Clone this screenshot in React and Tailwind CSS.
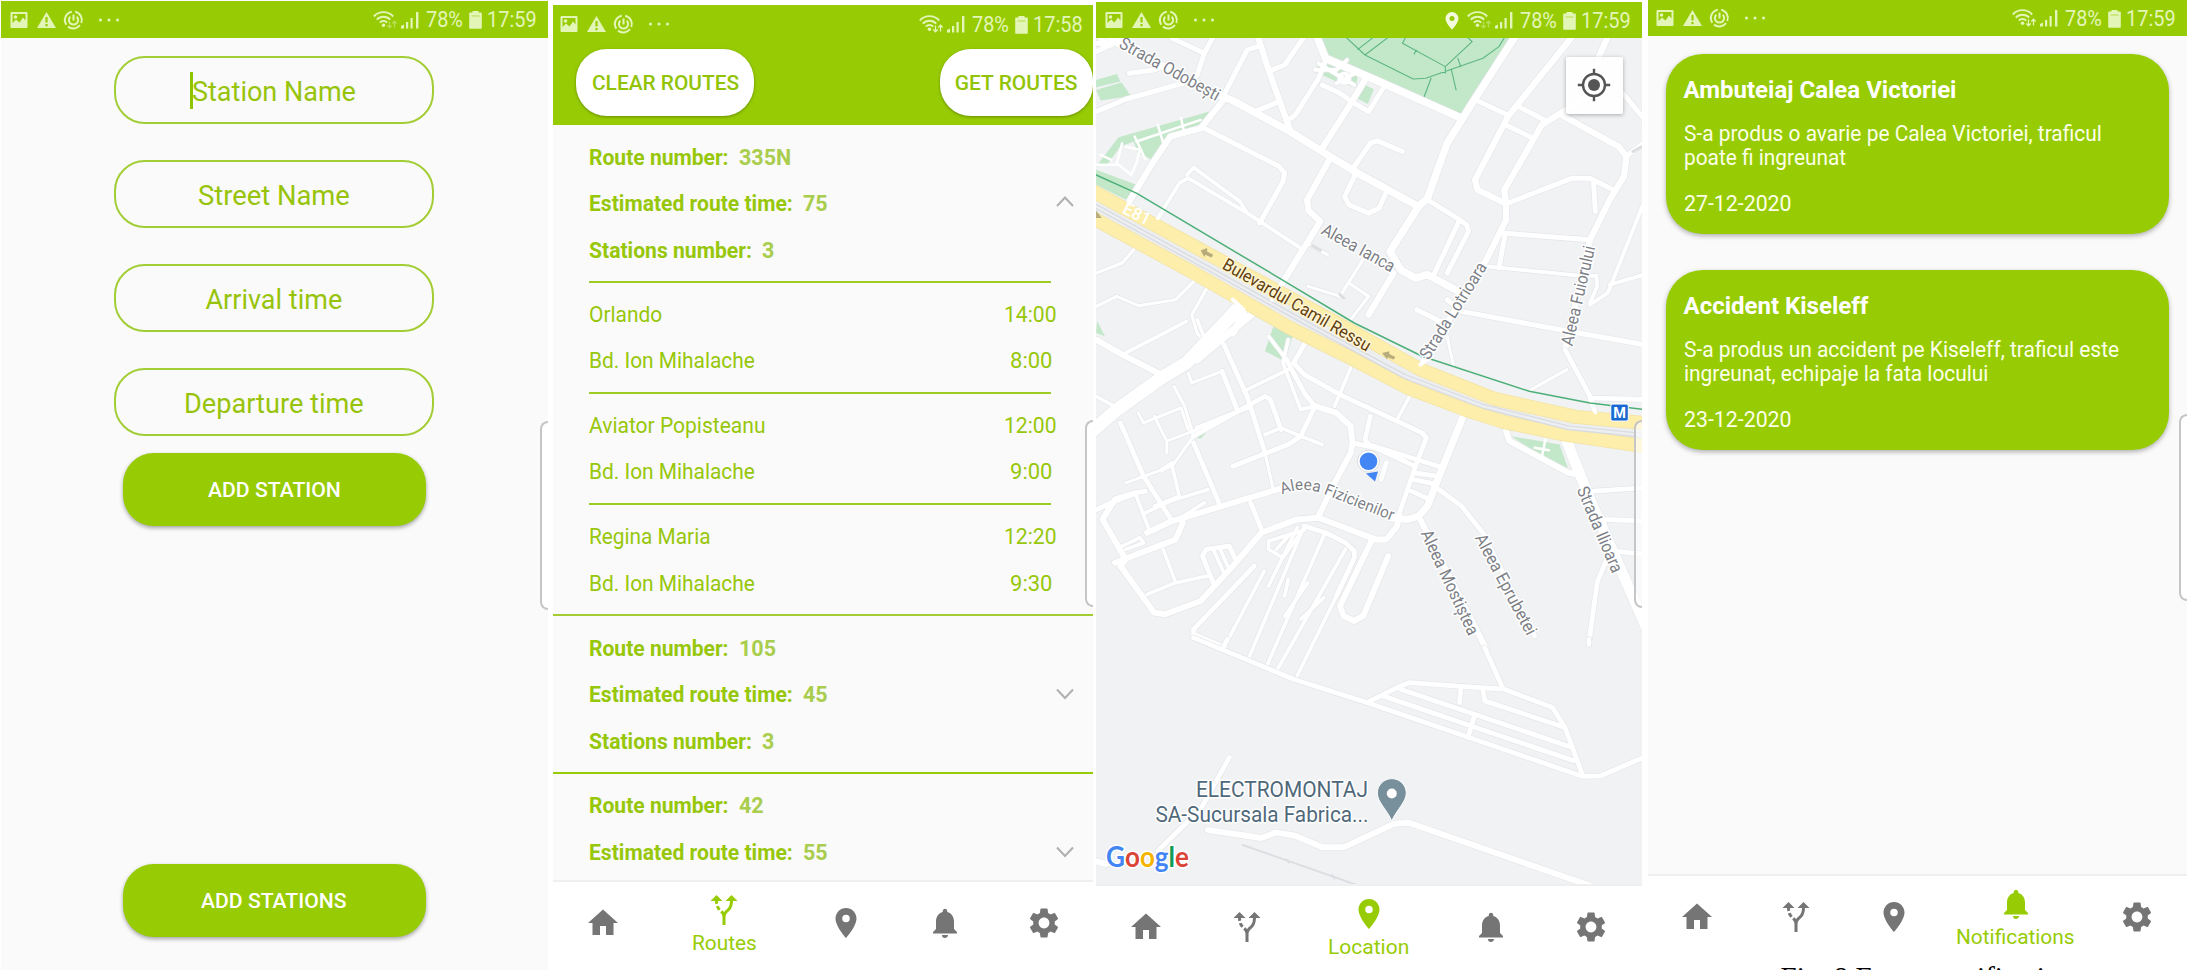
import { useLayoutEffect, useRef } from "react";
import { MdHome, MdAltRoute, MdLocationOn, MdNotifications, MdSettings } from "react-icons/md";

/* Text squeezed or stretched horizontally to fill the width of its box. */
function Fit({ className = "", children }) {
  const box = useRef(null);
  const inner = useRef(null);
  useLayoutEffect(() => {
    const w = inner.current.offsetWidth;
    if (w) inner.current.style.transform = `scaleX(${box.current.clientWidth / w})`;
  });
  return (
    <span ref={box} className={`flex shrink-0 ${className}`}>
      <span ref={inner} className="block shrink-0 origin-left whitespace-nowrap">{children}</span>
    </span>
  );
}

function StatusBar({ time, className, location, dimArrows }) {
  return (
    <div className={`flex h-9 shrink-0 items-center justify-between bg-[#97cc04] text-[#e4f5b8] ${className}`}>
      <svg width="110" height="20" viewBox="0 0 110 20" fill="none">
        <path fillRule="evenodd" fill="currentColor" d="M1.5 2h15a1 1 0 0 1 1 1v14a1 1 0 0 1-1 1h-15a1 1 0 0 1-1-1V3a1 1 0 0 1 1-1zM2.500 4v9l3.500-3.500 3.500 3 3.500-5 2.500 3V4z" />
        <circle cx="5.500" cy="7" r="1.800" fill="currentColor" />
        <path fillRule="evenodd" fill="currentColor" d="M36.500 2L46 18H27zM35.400 7v5.500h2.200V7zM35.400 14v2.200h2.200V14z" />
        <g stroke="currentColor" strokeWidth="2">
          <path d="M65.200 1.700A8.500 8.500 0 0 1 71.300 13M70 15.200A8.500 8.500 0 0 1 58 16.600M56.300 14.700A8.500 8.500 0 0 1 61.800 1.700" />
          <path d="M60.300 6.700A4.600 4.600 0 1 0 66.700 6.700M63.500 4.500v6" />
        </g>
        <g fill="currentColor">
          <circle cx="90.500" cy="10" r="1.500" />
          <circle cx="99" cy="10" r="1.500" />
          <circle cx="107.500" cy="10" r="1.500" />
        </g>
      </svg>
      <div className="flex items-center">
        {location && (
          <svg className="mr-[8px]" width="14" height="19" viewBox="0 0 14 19">
            <path fillRule="evenodd" fill="#f3fbdc" d="M7 1a6.500 6.500 0 0 1 6.500 6.500C13.500 12 7 18.500 7 18.500S.5 12 .5 7.500A6.500 6.500 0 0 1 7 1zm0 4a2.500 2.500 0 1 0 0 5 2.500 2.500 0 0 0 0-5z" />
          </svg>
        )}
        <svg width="48" height="20" viewBox="0 0 48 20" fill="none">
          <g stroke="currentColor" strokeWidth="1.900">
            <path d="M.8 6.500a13 13 0 0 1 19.400 0M3.800 9.700a9 9 0 0 1 13.400 0M6.800 12.700a5 5 0 0 1 7.400 0" />
          </g>
          <circle cx="10.500" cy="15.200" r="1.800" fill="currentColor" />
          <g stroke="currentColor" strokeWidth="1.300" opacity={dimArrows ? 0.45 : 1}>
            <path d="M16.500 11.500v6M14.300 15.500l2.200 2.300 2.200-2.300M21.500 17.500v-6M19.300 13.500l2.200-2.300 2.200 2.300" />
          </g>
          <g fill="currentColor">
            <path d="M28 18.500v-2.500l3-1.500v4zM33 12h2.200v6.500H33zM37.500 8h2.200v10.500h-2.200zM43 2h2.400v16.500H43z" />
          </g>
        </svg>
        <Fit className="ml-[5px] w-[37px] pt-px text-[21.500px] leading-6">78%</Fit>
        <svg className="mr-[5px] ml-[6px]" width="13" height="19" viewBox="0 0 13 19">
          <path fill="currentColor" d="M3.500 1h6v1.500H12a.8.8 0 0 1 .8.8V18a.8.8 0 0 1-.8.8H1a.8.8 0 0 1-.8-.8V3.300A.8.800 0 0 1 1 2.500h2.500z" />
          <path d="M2.500 6h8" stroke="#97cc04" strokeWidth="1" opacity=".6" />
        </svg>
        <Fit className="w-[50px] pt-px text-[21.500px] leading-6">{time}</Fit>
      </div>
    </div>
  );
}

const NAV = [
  ["Home", MdHome],
  ["Routes", MdAltRoute],
  ["Location", MdLocationOn],
  ["Notifications", MdNotifications],
  ["Settings", MdSettings],
];

function BottomNav({ active, labelWidth, className = "" }) {
  return (
    <nav className={`flex shrink-0 border-t-2 border-[#efefef] bg-white ${className}`}>
      {NAV.map(([name, Icon]) =>
        name === active ? (
          <div key={name} className="flex h-[82px] w-[144px] flex-col items-center pt-[10px] text-[#97cc04]">
            <Icon size={36} />
            <Fit className={`mt-[3px] text-[20.500px] leading-6 ${labelWidth}`}>{name}</Fit>
          </div>
        ) : (
          <div key={name} className="flex h-[82px] flex-1 items-center justify-center text-[#757575]">
            <Icon size={36} />
          </div>
        )
      )}
    </nav>
  );
}

function EdgeHandle({ className }) {
  return <div className={`absolute right-0 rounded-l-[9px] border-2 border-r-0 border-[#c6c6c6] ${className}`} />;
}

function StationForm() {
  const fields = [
    ["Station Name", "w-[164px]", true],
    ["Street Name", "w-[152px]"],
    ["Arrival time", "w-[137px]"],
    ["Departure time", "w-[180px]"],
  ];
  return (
    <section className="relative ml-px flex h-[970px] w-[547px] shrink-0 flex-col bg-[#fafafa]">
      <StatusBar time="17:59" className="mt-px h-[37px] pr-[11px] pl-[9px]" dimArrows />
      <div className="flex flex-1 flex-col items-center pt-[17.500px] pr-px">
        <div className="flex flex-col gap-9">
          {fields.map(([label, w, focus]) => (
            <div key={label} className="flex h-[68px] w-[320px] items-center justify-center rounded-[31px] border-2 border-[#a3cd35] pt-[4px] text-[#97c40b]">
              <span className="relative flex">
                {focus && <span className="absolute -top-[2px] -left-[2px] h-[37px] w-[3px] bg-[#8fc400]" />}
                <Fit className={`text-[27px] leading-9 ${w}`}>{label}</Fit>
              </span>
            </div>
          ))}
        </div>
        <button className="mt-[17px] flex h-[73px] w-[303px] items-center justify-center rounded-[31px] bg-[#97cc04] pt-[3px] text-[21px] font-medium text-white shadow-[0_2px_4px_rgba(0,0,0,0.35)]">
          <Fit className="w-[133px]">ADD STATION</Fit>
        </button>
        <button className="mt-auto mb-[33px] flex h-[73px] w-[303px] items-center justify-center rounded-[31px] bg-[#97cc04] pt-[3px] text-[21px] font-medium text-white shadow-[0_2px_4px_rgba(0,0,0,0.35)]">
          <Fit className="w-[146px]">ADD STATIONS</Fit>
        </button>
      </div>
      <EdgeHandle className="top-[421px] h-[189px] w-[8px] bg-white" />
    </section>
  );
}

function RouteHeader({ rows, open, className = "" }) {
  return (
    <div className={`relative flex flex-col pt-[8px] pl-9 ${className}`}>
      {rows.map(([label, value, w]) => (
        <div key={label} className="flex h-[46.700px] items-center gap-[10px] pt-[2px] text-[21.500px] font-bold text-[#97c70a]">
          <Fit className={w}>{label}</Fit>
          <span className="text-[#a9cd4d]">{value}</span>
        </div>
      ))}
      <svg className="absolute top-[70px] right-[18px]" width="20" height="14" viewBox="0 0 20 14" fill="none" stroke="#b0b0b0" strokeWidth="2">
        <path d={open ? "M2 11L10 2.500l8 8.500" : "M2 3.500l8 8.500L18 3.500"} />
      </svg>
    </div>
  );
}

function Stop({ name, nameW, street, arrive, depart }) {
  return (
    <div className="ml-9 w-[462px] border-t-2 border-[#9ccc1f] pt-[7.500px] pb-[8.300px] text-[21.500px] text-[#97c70a]">
      <div className="flex h-[46.700px] items-center justify-between pt-[2px]">
        <Fit className={nameW}>{name}</Fit>
        <span className="-mr-[9.500px] flex w-[60px] justify-center"><Fit className="w-[53px]">{arrive}</Fit></span>
      </div>
      <div className="flex h-[46.700px] items-center justify-between pt-[2px]">
        <Fit className="w-[166px]">{street}</Fit>
        <span className="-mr-[9.500px] flex w-[60px] justify-center"><Fit className="w-[42px]">{depart}</Fit></span>
      </div>
    </div>
  );
}

const ROUTE_ROWS = (number, time, stations) => [
  ["Route number:", number, "w-[140px]"],
  ["Estimated route time:", time, "w-[204px]"],
  ...(stations ? [["Stations number:", stations, "w-[163px]"]] : []),
];

function Routes() {
  return (
    <section className="relative mt-[5px] ml-[5px] flex h-[965px] w-[540px] shrink-0 flex-col overflow-hidden bg-[#fafafa]">
      <StatusBar time="17:58" className="pt-[2px] pr-[10px] pl-[7px]" />
      <div className="flex h-[84.300px] shrink-0 items-start justify-between bg-[#97cc04] pt-2 pl-[23px] text-[21px] font-medium text-[#92c406]">
        <button className="flex h-[66.500px] w-[178px] items-center justify-center rounded-[31px] bg-white pt-[2px] shadow-[0_1px_3px_rgba(60,80,0,0.5)]">
          <Fit className="w-[147px]">CLEAR ROUTES</Fit>
        </button>
        <button className="flex h-[66.500px] w-[153.500px] items-center justify-center rounded-[31px] bg-white pt-[2px] shadow-[0_1px_3px_rgba(60,80,0,0.5)]">
          <Fit className="w-[123px]">GET ROUTES</Fit>
        </button>
      </div>
      <div className="flex flex-1 flex-col overflow-hidden">
        <RouteHeader open rows={ROUTE_ROWS("335N", "75", "3")} className="pb-[7.500px]" />
        <Stop name="Orlando" nameW="w-[73px]" street="Bd. Ion Mihalache" arrive="14:00" depart="8:00" />
        <Stop name="Aviator Popisteanu" nameW="w-[176px]" street="Bd. Ion Mihalache" arrive="12:00" depart="9:00" />
        <Stop name="Regina Maria" nameW="w-[122px]" street="Bd. Ion Mihalache" arrive="12:20" depart="9:30" />
        <RouteHeader rows={ROUTE_ROWS("105", "45", "3")} className="border-t-2 border-[#a3cc33] pb-[7.700px]" />
        <RouteHeader rows={ROUTE_ROWS("42", "55")} className="border-t-2 border-[#97cc04]" />
      </div>
      <BottomNav active="Routes" labelWidth="w-[65px]" className="h-[90.500px]" />
      <EdgeHandle className="top-[415px] h-[187px] w-[8px] bg-white" />
    </section>
  );
}

/* Map geometry. Each entry: [road width in px, path]. */
const ROADS_NORTH = [
  [6, "M0 70L80 130L370 290L400 302L560 395L670 468L750 520L920 620"],
  [5, "M375 285L370 305L310 385L225 410L175 490L110 605"],
  [6, "M1190 110L1070 310L1000 430L945 595L920 620L840 755L870 810L910 835L945 825L1040 880"],
  [5, "M850 820L780 945"],
  [6, "M635 110L660 175L820 250L1040 355"],
  [5, "M470 110L500 210L560 390"],
  [4, "M345 110L320 160L300 225M320 160L230 115M17 155L90 118M17 335L100 298L260 250L300 225"],
  [4, "M30 118L60 135L20 130M110 220L180 210L230 190"],
  [4, "M375 285L440 150L475 138M600 110L545 195L505 212M460 335L530 305"],
  [4, "M562 355L575 345L640 235L660 180M650 255L700 280L740 310L780 335L822 262"],
  [3, "M630 210L690 210L720 180M640 190L700 230L740 255M690 250L750 215M700 235m-2 0a14 14 0 1 0 28 0a14 14 0 1 0 -28 0"],
  [4, "M320 385L530 500L545 520L540 545L475 670"],
  [3, "M190 655L250 550L275 535L440 640L590 745M272 525L290 503L420 605L440 640"],
  [5, "M770 240L725 320L650 445"],
  [4, "M740 500L785 430L805 423L875 455"],
  [5, "M670 480L608 600L612 632L645 665L590 760L510 900"],
  [4, "M745 520L713 590L725 615L780 640L810 625L830 575"],
  [4, "M945 600L1020 650L1055 675L1060 695L1000 820M1035 660L965 820"],
  [5, "M1350 110L1170 350L1078 540L1085 570L1165 612L1165 660L1110 780L930 1090"],
  [5, "M1450 110L1425 170L1420 220L1390 290L1310 345L1265 375L1160 570L1165 612"],
  [4, "M1080 300L1170 345M1200 320L1280 365M1165 375L1240 415"],
  [5, "M1320 345L1480 440L1502 470L1495 530L1455 600L1400 720L1370 860L1330 1050"],
  [4, "M1165 612L1350 535L1400 535L1465 570M1410 550L1415 635"],
  [4, "M1500 470L1550 430M1420 200L1500 290L1550 355"],
  [4, "M1155 700L1400 720M1163 700L1145 805"],
  [3, "M1110 800L1390 830L1418 828L1420 860L1400 910M1455 855L1550 825M1550 610L1450 880L1400 915"],
  [4, "M915 930L980 965M1000 900L1040 935L1290 985L1550 1035"],
  [2.500, "M17 920L75 890L135 918L240 900L300 835M330 860L285 945L300 1000L330 1040M130 740L90 790L17 820"],
  [2.500, "M610 860L700 890L770 770M725 850L780 890L730 960M615 735L665 765"],
];

const ROADS_MID = [
  [11, "M530 -60L420 -40L270 130L200 175L70 275L0 340"],
  [6, "M410 -60L430 -20L400 40M480 -40L300 120"],
  [5, "M17 60L90 105L200 165"],
  [3, "M90 105L190 50L270 5M17 230L85 270M300 0L330 80"],
  [4, "M85 310L150 470L230 605M375 75L440 230L490 400"],
  [2.500, "M490 400L512 505M275 160L285 190L370 155M235 200L265 260L290 350L230 440L100 490"],
  [4, "M370 155L410 265"],
  [2.500, "M135 280L150 310L255 265L275 330M180 290L215 365L215 400M215 365L300 330"],
  [4, "M290 370L365 560"],
  [4, "M290 350L490 230L505 240L535 330M300 325L440 265"],
  [3, "M430 215L555 150M490 345L535 325L590 350L650 375"],
  [4, "M550 120L600 220L630 260L590 350L555 375L400 440"],
  [3, "M500 50L550 120M555 60L540 130L590 270L620 262"],
  [4, "M605 65L570 130L600 165L700 225L930 340L942 355L915 430L860 600"],
  [3, "M730 145L685 260M895 230L860 300"],
  [5, "M630 260L690 280L730 320L735 370L730 400L685 490L640 590"],
  [4, "M785 290L770 360L780 375L980 442M735 370L800 385L910 440M830 430L815 480"],
  [6, "M1045 290L970 490L945 560L920 590L890 600L840 595"],
  [4, "M910 460L970 470M905 480L970 495M900 515L950 540"],
  [4, "M970 505L1040 560L1100 640L1245 950"],
  [5, "M920 590L1110 990"],
  [4, "M0 580L60 550L130 520L155 515"],
  [5, "M160 640L230 605L540 505"],
  [5, "M70 730L240 660L260 610"],
  [5, "M130 520L70 540L35 600L100 720L85 740L180 880L210 885L310 845L400 740L480 640L580 600L640 595L800 660L830 660L860 620L865 590"],
  [4, "M450 550L480 630"],
  [3, "M130 530L165 630M155 580L225 545L330 510M240 605L320 550M230 440L250 530L180 560M90 680L140 655L150 670L100 690"],
  [3, "M205 690L240 790L160 825M240 790L330 770M200 450L230 430L200 455"],
  [4, "M345 790L315 710L325 690L390 680L405 715"],
  [3, "M345 690L375 760M365 690L385 740"],
  [4, "M460 740L290 930L290 945L380 985"],
  [3, "M488 755L375 985M600 620L445 1015M658 640L495 1040M715 690L525 1050M580 625L500 800M690 830L580 1070"],
  [4, "M600 620L660 640L715 670L740 695L740 715L690 830"],
  [3, "M600 632L500 665L500 690L540 715L590 640M522 690L560 645M555 780L545 830"],
  [3, "M610 790L545 890M655 835L590 900"],
  [5, "M790 660L700 860L710 890L740 905L765 890L835 710"],
  [5, "M1165 335L1175 365L1340 460L1365 465"],
  [9, "M1335 365L1400 540L1560 930"],
  [4, "M1410 515L1550 505M1440 600L1550 605M1470 695L1550 705"],
  [4, "M1450 710L1420 790L1397 970"],
  [4, "M1330 90L1400 230L1415 280M1400 235L1550 240"],
  [2.500, "M1335 150L1235 210M1000 50L1018 140"],
];

const ROADS_SOUTH = [
  [4, "M290 -5L570 120L775 190L1380 412L1430 410L1550 355"],
  [4, "M775 190L860 145L895 130L1090 145L1160 150L1295 205L1330 265L1380 410"],
  [4, "M820 170L1080 265L1355 365M870 150L1350 325M1100 150L1105 185L1330 265M1038 150L1035 190M1075 235L1058 295"],
  [4, "M1105 25L1155 145M1397 0V15M375 20L385 0"],
  [4, "M390 355L310 510L190 635"],
  [5, "M330 573L480 597L520 580L575 590L650 625L710 625L850 555L890 550L1400 740"],
  [5, "M10 665L45 675"],
];

const UPPER_LANE = "M0 570L370 785L700 975L930 1112L1130 1197L1360 1252L1550 1270";
const LOWER_LANE = "M0 650L300 825L560 985L730 1075L890 1165L1050 1230L1160 1268L1330 1305L1550 1340";
const RAIL = "M0 610L330 805L630 985L880 1130L1100 1220L1340 1285L1550 1308";

function Roads({ roads, y, widen = 1.2 }) {
  return (
    <g transform={`translate(0 ${y})`}>
      {roads.map(([w, d]) => (
        <path key={"c" + d} d={d} stroke="#e4e6e9" strokeWidth={w * widen + 1.3} vectorEffect="non-scaling-stroke" />
      ))}
      {roads.map(([w, d]) => (
        <path key={d} d={d} stroke="#fff" strokeWidth={w * widen} vectorEffect="non-scaling-stroke" />
      ))}
    </g>
  );
}

function StreetLabel({ x, y, angle, length, color = "#7d8187", halo = "#fff", children }) {
  return (
    <text
      transform={`translate(${x} ${y}) rotate(${angle})`}
      textAnchor="middle"
      dy="6"
      fontSize="17.500"
      fill={color}
      stroke={halo}
      strokeWidth="3"
      strokeLinejoin="round"
      paintOrder="stroke"
      textLength={length}
      lengthAdjust="spacingAndGlyphs"
    >
      {children}
    </text>
  );
}

function CityMap() {
  return (
    <svg className="block size-full font-[Roboto,sans-serif]" viewBox="1096 38 545.500 847" preserveAspectRatio="none">
      <rect x="1096" y="38" width="546" height="847" fill="#f1f2f4" />
      <g transform="translate(1090 0) scale(0.35714 0.33333)" fill="none" strokeLinecap="round" strokeLinejoin="round">
        <g fill="#c3e7c9">
          <path d="M640 110H1188L1040 345L820 255L660 170Z" />
          <path d="M645 185L750 222L745 262L690 245L630 215ZM755 248L795 268L778 312L738 290Z" />
          <path d="M17 240L75 222L85 245L17 262ZM17 270L88 248L115 288L30 302Z" />
          <path d="M80 412L335 335L310 375L225 405L175 480L135 460L122 425L85 440L50 492L17 500Z" />
          <path d="M17 510L130 555L110 605L17 555Z" />
          <path d="M515 975L570 1000L545 1085L490 1055ZM290 1293L325 1300L310 1318L295 1315Z" />
          <path d="M1180 1310L1315 1335L1338 1405L1270 1375ZM20 965L42 1010L17 1000Z" />
        </g>
        <g stroke="#5cb683" strokeWidth="1.100">
          <path vectorEffect="non-scaling-stroke" d="M715 110L770 165L905 237L940 235L1100 175L1145 140L1162 110M750 148L790 115M770 165L835 112M885 110L875 130L995 200L1070 125L1055 110M908 162L913 150M1030 175L1038 200M995 200V220M1012 210L1025 270M955 235L935 292" />
        </g>
        <Roads roads={ROADS_NORTH} y={0} widen={1.25} />
        <Roads roads={ROADS_MID} y={960} />
        <Roads roads={ROADS_SOUTH} y={1920} />
        <g stroke="#fff" strokeWidth="2.500">
          <path vectorEffect="non-scaling-stroke" d="M130 425L310 360M155 478L125 410M190 375L205 430M255 355L262 390M30 465L60 480M20 495H75M90 430L75 490L115 525L130 490L140 450L100 440" />
          <path vectorEffect="non-scaling-stroke" d="M1275 1320L1265 1375M1245 1345L1285 1352" />
        </g>
        <path vectorEffect="non-scaling-stroke" d={RAIL} stroke="#eceef0" strokeWidth="20" />
        <path vectorEffect="non-scaling-stroke" d={UPPER_LANE} stroke="#f3e3a2" strokeWidth="14" />
        <path vectorEffect="non-scaling-stroke" d={LOWER_LANE} stroke="#f3e3a2" strokeWidth="14" />
        <path vectorEffect="non-scaling-stroke" d={UPPER_LANE} stroke="#fdeeac" strokeWidth="12.500" />
        <path vectorEffect="non-scaling-stroke" d={LOWER_LANE} stroke="#fdeeac" strokeWidth="12.500" />
        <path vectorEffect="non-scaling-stroke" d={RAIL} stroke="#d8dbe0" strokeWidth="5" />
        <path vectorEffect="non-scaling-stroke" d={RAIL} stroke="#eceef1" strokeWidth="2.500" />
        <g stroke="#fff" strokeWidth="4">
          <path vectorEffect="non-scaling-stroke" d="M548 830L510 900M130 570L108 612M205 630L190 655M950 1075L925 1095M1400 1200L1415 1238M400 900L430 930L410 960" />
        </g>
        <path vectorEffect="non-scaling-stroke" d="M17 525L130 580L530 835L740 970L930 1070L1230 1175L1400 1210L1550 1230" stroke="#4caf78" strokeWidth="1.500" />
        <path vectorEffect="non-scaling-stroke" d="M428 2538L745 2657" stroke="#dcdee1" strokeWidth="2" />
        <path vectorEffect="non-scaling-stroke" d="M550 2580L556 2592M678 2626L684 2640" stroke="#dcdee1" strokeWidth="1.500" />
        <path vectorEffect="non-scaling-stroke" d="M622 738L645 752M700 885L710 895M1520 455L1545 440" stroke="#dcdee0" strokeWidth="3" />
        <g fill="#b8ac7c">
          <path d="M310 752L328 745V755L345 765L340 773L323 765L320 772ZM818 1060L838 1055V1063L855 1072L850 1080L833 1073L832 1080ZM17 632L33 655L17 655Z" />
        </g>
      </g>
      <text transform="translate(1137 214) rotate(27)" textAnchor="middle" dy="6" fontSize="17" fontWeight="500" fill="#fff">E81</text>
      <StreetLabel x={1170} y={69} angle={29} length={112}>Strada Odobești</StreetLabel>
      <StreetLabel x={1358.500} y={248} angle={29} length={81}>Aleea Ianca</StreetLabel>
      <StreetLabel x={1297} y={305} angle={30} length={168} color="#61400f" halo="#fff6d6">Bulevardul Camil Ressu</StreetLabel>
      <StreetLabel x={1453} y={311} angle={-58} length={111}>Strada Lotrioara</StreetLabel>
      <StreetLabel x={1578} y={296} angle={-77} length={102}>Aleea Fuiorului</StreetLabel>
      <StreetLabel x={1450} y={583} angle={65} length={114}>Aleea Mostiștea</StreetLabel>
      <StreetLabel x={1506} y={585} angle={62} length={112}>Aleea Eprubetei</StreetLabel>
      <StreetLabel x={1600} y={530} angle={67} length={92}>Strada Ilioara</StreetLabel>
      <path id="fizicienilor" d="M1282 495Q1302 486 1325 495L1430 536" fill="none" />
      <text fontSize="16" fill="#7d8187" stroke="#fff" strokeWidth="3" strokeLinejoin="round" paintOrder="stroke">
        <textPath href="#fizicienilor" textLength="116" lengthAdjust="spacingAndGlyphs">Aleea Fizicienilor</textPath>
      </text>
      <rect x="1610.800" y="404.500" width="17.500" height="17" rx="2" fill="#1967d2" stroke="#fff" strokeWidth="1" />
      <text x="1619.500" y="418.500" textAnchor="middle" fontSize="14.500" fontWeight="700" fill="#fff">M</text>
      <path d="M1366 474L1378 472L1375 482Z" fill="#4285f4" />
      <circle cx="1368.500" cy="461.700" r="11" fill="#fff" stroke="#dadce0" strokeWidth="1" />
      <circle cx="1368.500" cy="461.700" r="8.800" fill="#4285f4" />
      <g fontSize="22" fill="#50697a" stroke="#fff" strokeWidth="3" strokeLinejoin="round" paintOrder="stroke">
        <text x="1196" y="797.500" textLength="172" lengthAdjust="spacingAndGlyphs">ELECTROMONTAJ</text>
        <text x="1155.500" y="822.500" textLength="213" lengthAdjust="spacingAndGlyphs">SA-Sucursala Fabrica...</text>
      </g>
      <path d="M1391.800 779.500c-8 0-14.500 6.500-14.500 14.500 0 9 10 17 14.500 28 4.500-11 14.500-19 14.500-28 0-8-6.500-14.500-14.500-14.500z" fill="#78909c" stroke="#fff" strokeWidth="1" />
      <circle cx="1391.800" cy="794.300" r="5" fill="#fff" />
      <text x="1106" y="868" fontSize="28" fontWeight="700" fontFamily="Lato" stroke="#fff" strokeWidth="3" strokeLinejoin="round" paintOrder="stroke" textLength="83" lengthAdjust="spacingAndGlyphs"><tspan fill="#4285f4">G</tspan><tspan fill="#db4437">o</tspan><tspan fill="#f4b400">o</tspan><tspan fill="#4285f4">g</tspan><tspan fill="#0f9d58">l</tspan><tspan fill="#db4437">e</tspan></text>
    </svg>
  );
}

function Location() {
  return (
    <section className="relative mt-[2px] ml-[3px] flex h-[968px] w-[545.500px] shrink-0 flex-col bg-white">
      <StatusBar time="17:59" location dimArrows className="pr-[11px] pl-[8.500px]" />
      <div className="relative h-[846px] shrink-0">
        <CityMap />
        <button className="absolute top-[18.500px] right-[19px] flex size-[57px] items-center justify-center rounded-[2px] bg-white/90 shadow-[0_1px_4px_rgba(0,0,0,0.3)]">
          <svg width="34" height="34" viewBox="0 0 34 34" fill="none" stroke="#555" strokeWidth="2.400">
            <circle cx="17" cy="17" r="11" />
            <circle cx="17" cy="17" r="6" fill="#555" stroke="none" />
            <path d="M17 .8v5.500M17 27.700v5.500M.8 17h5.500M27.700 17h5.500" />
          </svg>
        </button>
        <EdgeHandle className="top-[382px] h-[188px] w-[8px] bg-white/60" />
      </div>
      <BottomNav active="Location" labelWidth="w-[81px]" className="h-[86px]" />
    </section>
  );
}

function AlertCard({ title, titleW, lines, date }) {
  return (
    <article className="flex h-[180px] w-[503px] flex-col rounded-[37px] bg-[#97cc04] pl-[18px] text-[21.500px] leading-[24px] text-[#fcffe8] shadow-[0_2px_5px_rgba(0,0,0,0.3)]">
      <h2 className="mt-[20px] flex text-[24px] leading-8 font-bold text-white">
        <Fit className={titleW}>{title}</Fit>
      </h2>
      <div className="mt-[16px] flex flex-col items-start">
        {lines.map(([text, w]) => (
          <Fit key={text} className={w}>{text}</Fit>
        ))}
      </div>
      <div className="mt-[22px] flex">
        <Fit className="w-[108px]">{date}</Fit>
      </div>
    </article>
  );
}

function Notifications() {
  return (
    <section className="relative ml-[6px] flex h-[970px] w-[539px] shrink-0 flex-col overflow-hidden bg-[#fafafa]">
      <StatusBar time="17:59" className="pr-[11px] pl-[8px]" />
      <div className="flex flex-1 flex-col items-center gap-[35.700px] pt-[18px]">
        <AlertCard
          title="Ambuteiaj Calea Victoriei"
          titleW="w-[273px]"
          lines={[
            ["S-a produs o avarie pe Calea Victoriei, traficul", "w-[418px]"],
            ["poate fi ingreunat", "w-[162px]"],
          ]}
          date="27-12-2020"
        />
        <AlertCard
          title="Accident Kiseleff"
          titleW="w-[185px]"
          lines={[
            ["S-a produs un accident pe Kiseleff, traficul este", "w-[435px]"],
            ["ingreunat, echipaje la fata locului", "w-[304px]"],
          ]}
          date="23-12-2020"
        />
      </div>
      <BottomNav active="Notifications" labelWidth="w-[119px]" className="h-[84px]" />
      <div className="h-3 shrink-0 bg-white pt-[3px] pl-[133px]">
        <p className="font-['Liberation_Serif',serif] text-[29px] leading-[33px] whitespace-nowrap text-black">
          Fig. 8 Forum notifications
        </p>
      </div>
      <EdgeHandle className="top-[414px] h-[187px] w-[8px] bg-white" />
    </section>
  );
}

export default function App() {
  return (
    <main className="flex h-[970px] w-[2189px] overflow-hidden bg-white font-[Roboto,sans-serif]">
      <StationForm />
      <Routes />
      <Location />
      <Notifications />
    </main>
  );
}
